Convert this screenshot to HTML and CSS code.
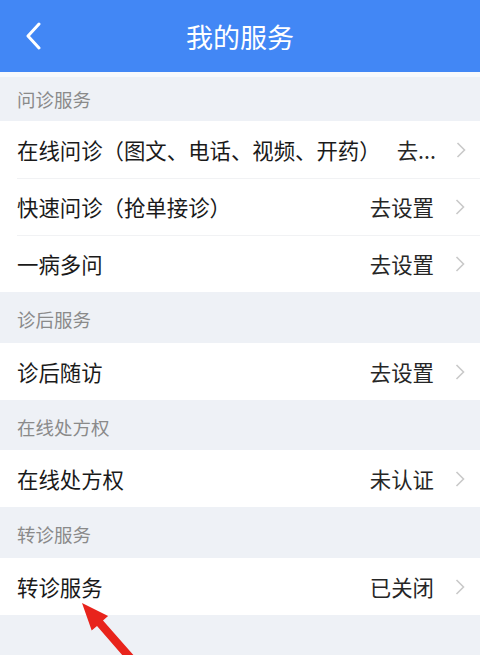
FILE: index.html
```html
<!DOCTYPE html>
<html lang="zh-CN">
<head>
<meta charset="utf-8">
<title>我的服务</title>
<link rel="stylesheet" href="styles.css">
</head>
<body>
<div class="page">
  <header class="topbar">
    <svg class="back" width="18" height="28" viewBox="0 0 18 28"><polyline points="14,2 3,14 14,26" fill="none" stroke="#fff" stroke-width="3" stroke-linecap="round" stroke-linejoin="round"/></svg>
    <h1 class="title">我的服务</h1>
  </header>

  <div class="section first">问诊服务</div>
  <div class="group">
    <div class="row"><span class="label">在线问诊（图文、电话、视频、开药）</span><span class="value">去...</span><svg class="chev" width="10" height="16" viewBox="0 0 10 16"><polyline points="1.5,1 8.5,8 1.5,15" fill="none" stroke="#c9c9c9" stroke-width="1.6"/></svg></div>
    <div class="row"><span class="label">快速问诊（抢单接诊）</span><span class="value">去设置</span><svg class="chev" width="10" height="16" viewBox="0 0 10 16"><polyline points="1.5,1 8.5,8 1.5,15" fill="none" stroke="#c9c9c9" stroke-width="1.6"/></svg></div>
    <div class="row"><span class="label">一病多问</span><span class="value">去设置</span><svg class="chev" width="10" height="16" viewBox="0 0 10 16"><polyline points="1.5,1 8.5,8 1.5,15" fill="none" stroke="#c9c9c9" stroke-width="1.6"/></svg></div>
  </div>

  <div class="section">诊后服务</div>
  <div class="group">
    <div class="row"><span class="label">诊后随访</span><span class="value">去设置</span><svg class="chev" width="10" height="16" viewBox="0 0 10 16"><polyline points="1.5,1 8.5,8 1.5,15" fill="none" stroke="#c9c9c9" stroke-width="1.6"/></svg></div>
  </div>

  <div class="section">在线处方权</div>
  <div class="group">
    <div class="row"><span class="label">在线处方权</span><span class="value">未认证</span><svg class="chev" width="10" height="16" viewBox="0 0 10 16"><polyline points="1.5,1 8.5,8 1.5,15" fill="none" stroke="#c9c9c9" stroke-width="1.6"/></svg></div>
  </div>

  <div class="section">转诊服务</div>
  <div class="group">
    <div class="row"><span class="label">转诊服务</span><span class="value">已关闭</span><svg class="chev" width="10" height="16" viewBox="0 0 10 16"><polyline points="1.5,1 8.5,8 1.5,15" fill="none" stroke="#c9c9c9" stroke-width="1.6"/></svg></div>
  </div>

  <svg class="annot" width="480" height="655" viewBox="0 0 480 655">
    <polygon points="82,603 91.7,630.5 97,626 130,664 136,658 103,620.5 108.1,615.9" fill="#e8241c"/>
  </svg>
</div>
</body>
</html>
```

FILE: styles.css
```css
* { box-sizing: border-box; }
html, body {
  margin: 0;
  padding: 0;
}
body {
  background: #eef1f6;
  font-family: "Noto Sans CJK SC", "Noto Sans", sans-serif;
}
.page {
  position: relative;
  width: 480px;
  height: 655px;
  overflow: hidden;
  background: #eef1f6;
}
.topbar {
  height: 72px;
  background: #4287f5;
  display: flex;
  align-items: center;
  justify-content: center;
  position: relative;
}
.back {
  position: absolute;
  left: 25px;
  top: 22px;
}
.title {
  margin: 0;
  font-size: 27px;
  font-weight: 400;
  color: #fff;
}
.section {
  height: 50.5px;
  display: flex;
  align-items: center;
  padding: 4px 17px 0;
  font-size: 18.5px;
  color: #8a8a8a;
}
.section.first {
  height: 49px;
  background: linear-gradient(#f7f9fc 0 5px, #eef1f6 5px);
}
.group {
  background: #fff;
}
.row {
  height: 57px;
  display: flex;
  align-items: center;
  padding: 0 15.5px 0 17px;
  font-size: 21.4px;
  color: #1a1a1a;
  position: relative;
}
.row + .row::before {
  content: "";
  position: absolute;
  top: 0;
  left: 17px;
  right: 0;
  height: 1px;
  background: #f1f2f4;
}
.label {
  flex: 0 0 auto;
  white-space: nowrap;
}
.value {
  flex: 1 1 auto;
  text-align: right;
  white-space: nowrap;
  color: #262626;
  margin-left: 16px;
  margin-right: 20.5px;
}
.chev {
  flex: 0 0 auto;
  margin-top: 1px;
}
.annot {
  position: absolute;
  left: 0;
  top: 0;
  pointer-events: none;
}
```
